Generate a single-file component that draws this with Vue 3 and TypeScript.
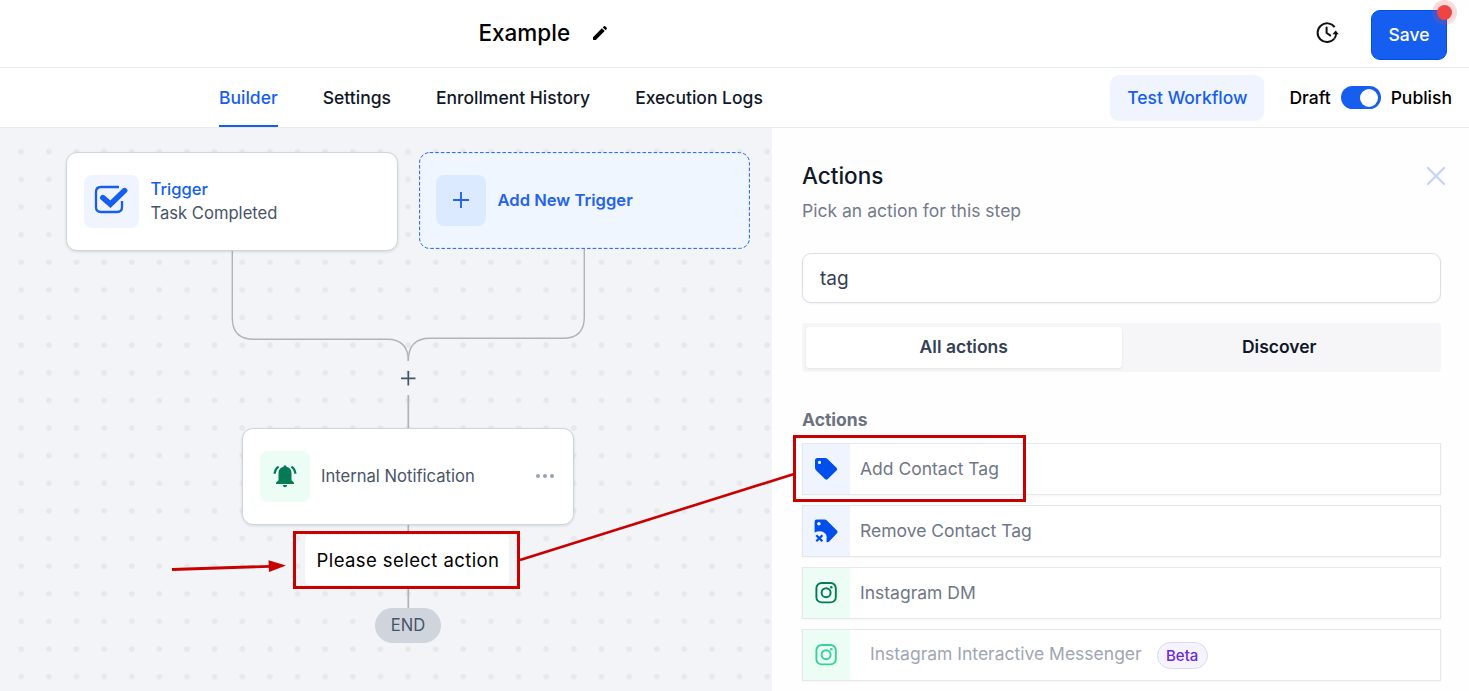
<script setup lang="ts">
import { ref } from 'vue'

type IconName = 'tag' | 'tag-remove' | 'instagram'

interface ActionItem {
  label: string
  icon: IconName
  tone: 'blue' | 'green' | 'mint'
  beta?: boolean
}

const tabs = ['Builder', 'Settings', 'Enrollment History', 'Execution Logs']
const activeTab = ref('Builder')
const search = ref('tag')
const published = ref(true)

const actions: ActionItem[] = [
  { label: 'Add Contact Tag', icon: 'tag', tone: 'blue' },
  { label: 'Remove Contact Tag', icon: 'tag-remove', tone: 'blue' },
  { label: 'Instagram DM', icon: 'instagram', tone: 'green' },
  { label: 'Instagram Interactive Messenger', icon: 'instagram', tone: 'mint', beta: true },
]
</script>

<template>
  <div class="app">
    <header class="topbar">
      <div class="title">
        <h1>Example</h1>
        <svg class="pencil" width="16" height="16" viewBox="0 0 16 16">
          <path d="M1 12.2 9.9 3.3l2.8 2.8L3.8 15H1zM10.8 2.4l1.1-1.1q.7-.7 1.4 0l1.4 1.4q.7.7 0 1.4l-1.1 1.1z" fill="#000" />
        </svg>
      </div>
      <div class="top-actions">
        <svg class="history" width="24" height="25" viewBox="0 0 24 25" fill="none" stroke="#111" stroke-width="2">
          <g transform="translate(0 .6)">
            <path d="M19.6 6.6A9.4 9.4 0 1 0 19.4 17.9" />
            <path d="M21.2 12.4a9.4 9.4 0 0 1-1.8 5.5" />
            <path d="M11.6 6.8v5.6l3.600 2.400" stroke-linecap="round" />
            <path d="M20.700 9.8 23.8 13.6H17.400z" fill="#111" stroke="none" />
          </g>
        </svg>
        <button class="save">Save<span class="unsaved"></span></button>
      </div>
    </header>

    <nav class="tabbar">
      <div class="tabs">
        <a v-for="tab in tabs" :key="tab" class="tab" :class="{ active: tab === activeTab }" @click="activeTab = tab">{{ tab }}</a>
      </div>
      <div class="publish">
        <button class="test">Test Workflow</button>
        <span class="draft">Draft</span>
        <span class="switch" :class="{ on: published }" @click="published = !published"></span>
        <span class="live">Publish</span>
      </div>
    </nav>

    <main class="workspace">
      <section class="canvas">
        <svg class="layer" width="772" height="563" viewBox="0 128 772 563" fill="none">
          <defs>
            <pattern id="dots" x="7.4" y="137.8" width="27.63" height="27.63" patternUnits="userSpaceOnUse">
              <circle cx="13.8" cy="13.8" r="2.8" fill="#e7e8e9" />
            </pattern>
          </defs>
          <rect x="0" y="145" width="772" height="546" fill="url(#dots)" />
          <g stroke="#b1b3b8" stroke-width="1.4">
            <path d="M232.3 250V318Q232.3 339.3 254 339.3H387Q408.3 339.3 408.3 361" />
            <path d="M584.3 249V317Q584.3 338.3 563 338.3H430Q408.3 338.3 408.3 361" />
            <path d="M408.3 395V429M408.3 524V532M408.3 588V608" stroke-width="1.7" />
          </g>
          <path d="M401 378.3H415.5M408.3 371V385.5" stroke="#475467" stroke-width="1.7" />
        </svg>

        <div class="node trigger">
          <span class="tile tile-trigger">
            <svg width="34" height="30" viewBox="0 0 34 30" fill="none" stroke="#155eef">
              <path d="M25 2H7Q2 2 2 7V22Q2 27 7 27H23Q28 27 28 22V16" stroke-width="2.3" />
              <path d="M8.8 12.7 16.4 19.2 30.6 5.6" stroke-width="5.6" stroke-linecap="round" />
            </svg>
          </span>
          <span class="node-text"><b>Trigger</b><span>Task Completed</span></span>
        </div>

        <div class="node add-trigger">
          <svg class="dash" width="331" height="97"><rect x=".6" y=".6" width="329.8" height="95.8" rx="10" /></svg>
          <span class="tile tile-add">
            <svg width="18" height="18" viewBox="0 0 18 18"><path d="M1 9h16M9 1v16" stroke="#2563eb" stroke-width="1.9" /></svg>
          </span>
          <span class="add-label">Add New Trigger</span>
        </div>

        <div class="node notification">
          <span class="tile tile-bell">
            <svg width="24" height="24" viewBox="0 0 24 24" fill="#067a57">
              <path d="M12 1.3q1.4 0 1.6 1.5C17 3.6 18.5 6 18.5 9v7.2l2.4 2.3v1.4H3.1v-1.4l2.4-2.3V9c0-3 1.5-5.4 4.9-6.2Q10.600 1.300 12 1.300zM9.800 21h4.400q-.3 2.200-2.200 2.200T9.800 21z" />
              <path d="M1.600 9.800Q1.900 5.200 5.600 2.600M22.400 9.800Q22.100 5.200 18.400 2.600" fill="none" stroke="#067a57" stroke-width="2.300" />
            </svg>
          </span>
          <span class="notification-label">Internal Notification</span>
          <span class="more"><i></i><i></i><i></i></span>
        </div>

        <div class="callout select-callout"><span class="select-action">Please select action</span></div>
        <div class="end">END</div>
      </section>

      <aside class="panel">
        <div class="panel-head">
          <h2>Actions</h2>
          <svg width="20" height="20" viewBox="0 0 20 20"><path d="M2 2 18 18M18 2 2 18" stroke="#c7d3ff" stroke-width="2.4" stroke-linecap="round" /></svg>
        </div>
        <p class="hint">Pick an action for this step</p>
        <input v-model="search" class="search" type="text" />
        <div class="segments">
          <button class="segment selected">All actions</button>
          <button class="segment">Discover</button>
        </div>
        <h3>Actions</h3>
        <ul class="list">
          <li v-for="item in actions" :key="item.label" class="action" :class="[item.tone, { wide: item.beta }]">
            <span class="action-icon">
              <svg v-if="item.icon === 'tag'" width="24" height="24" viewBox="0 0 24 24">
                <path fill="currentColor" fill-rule="evenodd" d="M1 3.500Q1 1 3.500 1H11q1.500 0 2.500 1L22.500 10.800q1.400 1.400 0 2.700l-8.700 8.600q-1.400 1.400-2.800 0L2 13.200q-1-1-1-2.400zM5.500 3.800a1.600 1.600 0 1 0 0 3.200a1.600 1.600 0 0 0 0-3.200z" />
              </svg>
              <svg v-else-if="item.icon === 'tag-remove'" width="24" height="24" viewBox="0 0 24 24">
                <path fill="currentColor" fill-rule="evenodd" d="M.6 2.800Q.6.600 2.800.600H10.500q1.400 0 2.400 1l10 10q1.200 1.300 0 2.600l-7.700 8.200q-.9.900-2.700.8v-3.600q1-5.500-4.600-7.200-3.700-.7-7.300 1.200zM4.900 2.900a1.800 1.800 0 1 0 0 3.600a1.800 1.800 0 0 0 0-3.600z" />
                <path d="M2.300 16.200 8.400 22.300M8.400 16.200 2.300 22.300" stroke="currentColor" stroke-width="2.300" />
              </svg>
              <svg v-else width="24" height="24" viewBox="0 0 24 24" fill="none" stroke="currentColor" stroke-width="1.900">
                <rect x="2.400" y="2" width="19.400" height="19.400" rx="5.200" />
                <circle cx="12.100" cy="11.700" r="4.500" />
                <circle cx="17.300" cy="6.200" r="1.300" fill="currentColor" stroke="none" />
              </svg>
            </span>
            <span class="action-label">{{ item.label }}</span>
            <span v-if="item.beta" class="beta">Beta</span>
          </li>
        </ul>
      </aside>
    </main>

    <svg class="annotations" width="1469" height="691" viewBox="0 0 1469 691" fill="none" stroke="#c80000">
      <rect x="794.500" y="436.500" width="230" height="64" stroke-width="3" />
      <path d="M520 560 794 474" stroke-width="2.600" />
      <path d="M172 569.500 270 566.300" stroke-width="2.800" />
      <path d="M268.500 560.300 286 565.500 269 572z" fill="#c80000" stroke="none" />
    </svg>
  </div>
</template>

<style>
body {
  margin: 0;
  overflow: hidden;
}
</style>

<style scoped>
* {
  box-sizing: border-box;
}
.app {
  position: relative;
  width: 1469px;
  height: 691px;
  display: flex;
  flex-direction: column;
  overflow: hidden;
  background: #fff;
  color: #000;
  font-family: Inter, 'Liberation Sans', sans-serif;
  font-size: 17.5px;
}
h1, h2, h3, p, ul {
  margin: 0;
  padding: 0;
}
button {
  border: 0;
  padding: 0;
  font: inherit;
  cursor: pointer;
}
svg {
  display: block;
  flex: none;
}
.topbar {
  height: 68px;
  flex: none;
  display: flex;
  justify-content: space-between;
  border-bottom: 1px solid #e8eaed;
  padding: 0 22px 0 478.5px;
}
.title {
  display: flex;
  align-items: center;
  gap: 21.5px;
  height: 66px;
}
h1 {
  font-size: 22.5px;
  font-weight: 500;
  line-height: 28px;
}
.top-actions {
  display: flex;
  align-items: flex-start;
  padding-top: 10px;
  gap: 32px;
}
.history {
  margin-top: 10px;
}
.save {
  position: relative;
  width: 76px;
  height: 50px;
  padding-bottom: 2px;
  border: 1px solid #004eeb;
  border-radius: 9px;
  background: #155eef;
  color: #fff;
  font-weight: 500;
}
.unsaved {
  position: absolute;
  top: -6px;
  right: -6px;
  width: 15px;
  height: 15px;
  border-radius: 50%;
  background: #ef4444;
  box-shadow: 0 0 0 5px rgba(239, 68, 68, 0.2);
}
.tabbar {
  height: 60px;
  flex: none;
  display: flex;
  justify-content: space-between;
  border-bottom: 1px solid #e8eaed;
  padding: 0 17px 0 219px;
}
.tabs {
  display: flex;
  gap: 45px;
}
.tab {
  height: 59px;
  line-height: 59px;
  font-weight: 500;
  color: #101828;
  white-space: nowrap;
}
.tab.active {
  color: #155eef;
  border-bottom: 2px solid #155eef;
}
.publish {
  display: flex;
  align-items: center;
  height: 59px;
  font-weight: 500;
  white-space: nowrap;
}
.test {
  width: 154px;
  height: 45px;
  border-radius: 9px;
  background: #eff4ff;
  color: #155eef;
  font-weight: 500;
  box-shadow: 0 1px 2px rgba(16, 24, 40, 0.05);
}
.draft {
  margin-left: 25px;
}
.switch {
  display: flex;
  align-items: center;
  width: 40px;
  height: 23px;
  margin: 0 10px;
  padding: 0 3px;
  border-radius: 12px;
  background: #98a2b3;
}
.switch.on {
  justify-content: flex-end;
  background: #155eef;
}
.switch::after {
  content: '';
  width: 18px;
  height: 18px;
  border-radius: 50%;
  background: #fff;
}
.workspace {
  flex: 1;
  display: flex;
  min-height: 0;
}
.canvas {
  position: relative;
  width: 772px;
  flex: none;
  background: #f2f4f7;
  overflow: hidden;
}
.layer,
.dash {
  position: absolute;
  left: 0;
  top: 0;
}
.node {
  position: absolute;
  display: flex;
  align-items: center;
  width: 332px;
  border: 1px solid #d0d5dd;
  border-radius: 11px;
  background: #fff;
  box-shadow: 0 1px 3px rgba(16, 24, 40, 0.12);
  padding-left: 16px;
  white-space: nowrap;
}
.tile {
  display: flex;
  align-items: center;
  justify-content: center;
  width: 50px;
  height: 51px;
  border-radius: 8px;
}
.trigger {
  left: 66px;
  top: 24px;
  height: 99px;
  padding-left: 17px;
}
.tile-trigger {
  width: 55px;
  height: 53px;
  background: #eff4ff;
  padding: 0 2px 3px 0;
}
.node-text {
  display: flex;
  flex-direction: column;
  margin-left: 11.5px;
  padding-bottom: 2px;
  line-height: 24px;
  color: #475467;
  font-size: 16.6px;
}
.node-text b {
  font-weight: 500;
  color: #155eef;
}
.add-trigger {
  left: 419px;
  top: 24px;
  width: 331px;
  height: 97px;
  border: 0;
  background: #eff6ff;
  box-shadow: none;
  padding-left: 17px;
}
.dash rect {
  fill: none;
  stroke: #2563eb;
  stroke-width: 1;
  stroke-dasharray: 3.6 2;
}
.tile-add {
  background: #dbeafe;
  padding-bottom: 2px;
}
.add-label {
  margin-left: 11.5px;
  padding-bottom: 2px;
  color: #2563eb;
  font-size: 16.6px;
  font-weight: 600;
}
.notification {
  left: 242px;
  top: 300px;
  height: 97px;
  padding: 0 19px 0 17px;
  color: #475467;
}
.tile-bell {
  background: #ecfdf5;
  padding-bottom: 1px;
}
.notification-label {
  margin-left: 11px;
  padding-bottom: 2px;
  font-size: 16.6px;
}
.more {
  display: flex;
  gap: 3px;
  margin-left: auto;
  padding-bottom: 1px;
}
.more i {
  width: 4px;
  height: 4px;
  border-radius: 50%;
  background: #98a2b3;
}
.callout {
  position: absolute;
  border: 3px solid #c80000;
}
.select-callout {
  left: 293px;
  top: 403px;
  width: 227px;
  height: 58px;
  display: flex;
  justify-content: center;
}
.select-action {
  width: 206px;
  height: 52px;
  border: 1px dotted #e4e7ec;
  border-radius: 6px;
  background: #fff;
  font-size: 18.5px;
  letter-spacing: 0.42px;
  padding-left: 3px;
  line-height: 51px;
  text-align: center;
  white-space: nowrap;
}
.end {
  position: absolute;
  left: 375px;
  top: 480px;
  width: 66px;
  height: 35px;
  border-radius: 18px;
  background: #d0d5dd;
  color: #475467;
  font-size: 16.6px;
  line-height: 35px;
  text-align: center;
}
.panel {
  flex: 1;
  min-width: 0;
  padding: 33px 28px 0 30px;
  background: #fefefe;
}
.panel-head {
  display: flex;
  align-items: center;
  justify-content: space-between;
  height: 30px;
  margin-right: -5px;
}
h2 {
  padding-bottom: 2px;
  font-size: 22.5px;
  font-weight: 500;
  color: #101828;
}
.hint {
  margin-top: 8px;
  line-height: 24px;
  font-size: 17.55px;
  color: #737b8b;
}
.search {
  display: block;
  width: 639px;
  height: 50px;
  margin-top: 30px;
  padding: 0 17px;
  border: 1px solid #dcdfe6;
  border-radius: 9px;
  outline: 0;
  background: #fff;
  box-shadow: 0 1px 2px rgba(16, 24, 40, 0.05);
  color: #344054;
  font: inherit;
  font-size: 19px;
}
.segments {
  display: flex;
  width: 639px;
  height: 49px;
  margin-top: 20px;
  padding: 4px;
  border-radius: 4px;
  background: #f6f6f9;
}
.segment {
  flex: 1;
  padding-bottom: 2px;
  border-radius: 4px;
  background: transparent;
  color: #101828;
  font-weight: 600;
}
.segment.selected {
  background: #fff;
  color: #344054;
  box-shadow: 0 1px 3px rgba(0, 0, 0, 0.08);
}
h3 {
  margin-top: 36px;
  height: 24px;
  line-height: 24px;
  font-size: 17.5px;
  font-weight: 700;
  color: #6b7280;
}
.list {
  display: flex;
  flex-direction: column;
  gap: 10px;
  width: 639px;
  margin-top: 11px;
  list-style: none;
}
.action {
  display: flex;
  align-items: center;
  height: 52px;
  border: 1px solid #e5e7eb;
  background: #fff;
  box-shadow: 0 1px 2px rgba(0, 0, 0, 0.04);
  color: #6f7787;
  white-space: nowrap;
}
.action-icon {
  display: flex;
  align-items: center;
  justify-content: center;
  width: 47px;
  height: 50px;
  padding-right: 1px;
  background: #ecfdf5;
}
.action-label {
  margin-left: 10px;
  margin-bottom: 2px;
}
.blue .action-icon {
  background: #eff4ff;
  color: #004eeb;
}
.green .action-icon {
  color: #067a57;
}
.mint .action-icon {
  color: #34d399;
}
.wide .action-label {
  margin-left: 20px;
  margin-bottom: 3px;
  color: #a0a6b2;
}
.beta {
  width: 51px;
  height: 27px;
  margin-left: 15px;
  border: 1px solid #ddd8ee;
  border-radius: 14px;
  background: #f5f3ff;
  color: #6d28d9;
  font-size: 15px;
  font-weight: 500;
  line-height: 25px;
  text-align: center;
}
.annotations {
  position: absolute;
  inset: 0;
  pointer-events: none;
}
</style>
